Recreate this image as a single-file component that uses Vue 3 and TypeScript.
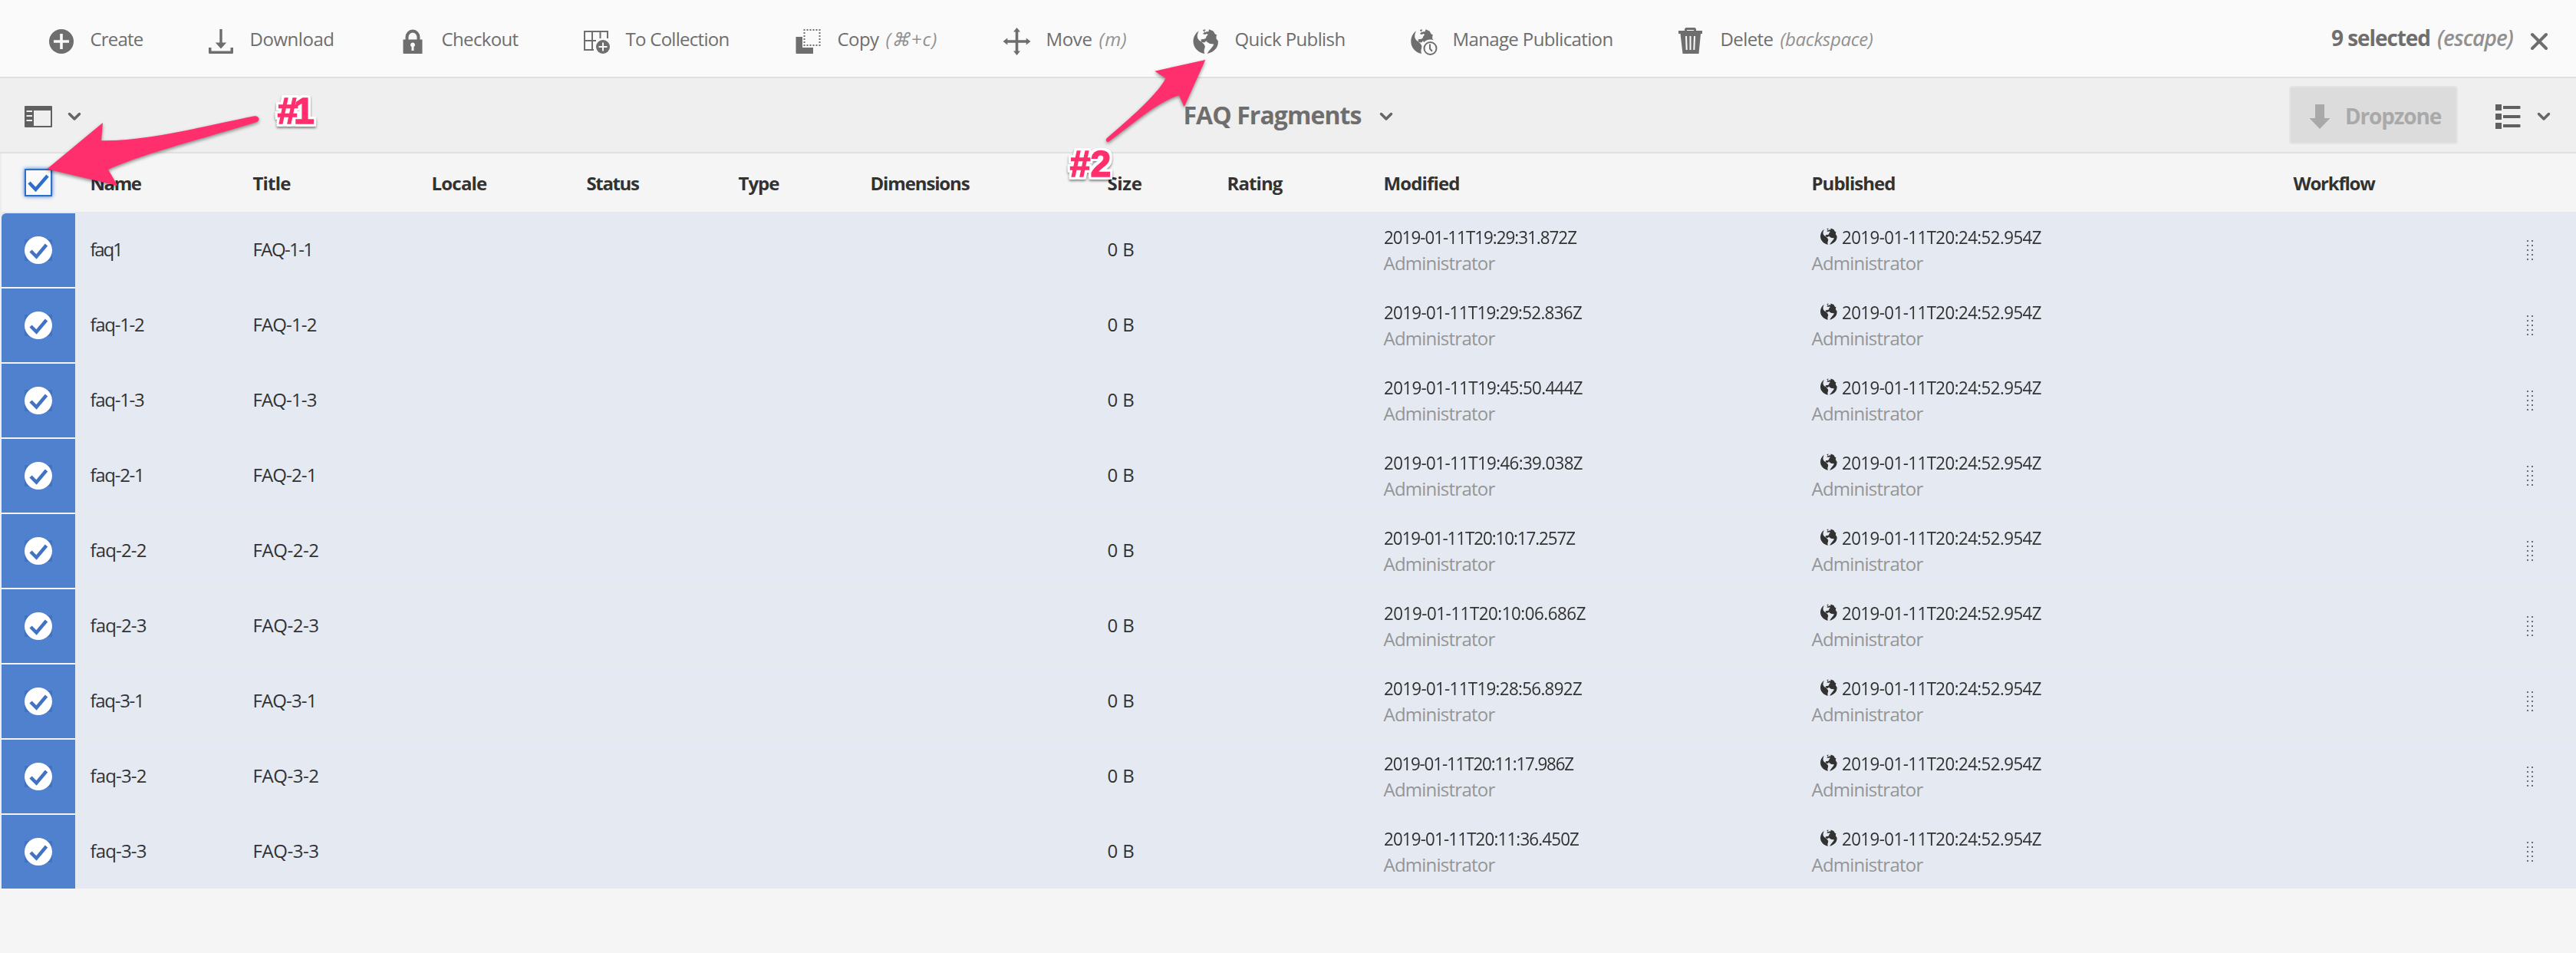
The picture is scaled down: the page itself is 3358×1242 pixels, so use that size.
<script setup lang="ts">
import type { Directive } from 'vue'

interface Action {
  icon: string
  label: string
  width: number
  hint?: string
  hintWidth?: number
}

interface Row {
  name: string
  nameWidth: number
  title: string
  titleWidth: number
  modified: string
  modifiedWidth: number
}

// Tracks a label so that it fills the given width; `narrow` also condenses its glyphs.
const vFit: Directive<HTMLElement, number, 'narrow'> = {
  mounted(el, { value, modifiers }) {
    const count = Array.from(el.textContent ?? '').length
    if (!value || !count) return
    const scale = modifiers.narrow ? 0.93 : 1
    const spacing = (value / scale - el.getBoundingClientRect().width) / count
    el.style.letterSpacing = `${spacing.toFixed(3)}px`
    if (scale !== 1) el.style.transform = `scaleX(${scale})`
  },
}

const actions: Action[] = [
  { icon: 'create', label: 'Create', width: 69 },
  { icon: 'download', label: 'Download', width: 110 },
  { icon: 'checkout', label: 'Checkout', width: 100 },
  { icon: 'collection', label: 'To Collection', width: 135 },
  { icon: 'copy', label: 'Copy', width: 54, hint: '(⌘+c)', hintWidth: 68 },
  { icon: 'move', label: 'Move', width: 60, hint: '(m)', hintWidth: 37 },
  { icon: 'globe', label: 'Quick Publish', width: 144 },
  { icon: 'manage', label: 'Manage Publication', width: 209 },
  { icon: 'delete', label: 'Delete', width: 69, hint: '(backspace)', hintWidth: 121 },
]

const columns = [
  { label: 'Name', width: 66 },
  { label: 'Title', width: 49 },
  { label: 'Locale', width: 72 },
  { label: 'Status', width: 68 },
  { label: 'Type', width: 53 },
  { label: 'Dimensions', width: 129 },
  { label: 'Size', width: 45 },
  { label: 'Rating', width: 72 },
  { label: 'Modified', width: 99 },
  { label: 'Published', width: 109 },
  { label: 'Workflow', width: 106 },
]

const rows: Row[] = [
  { name: 'faq1', nameWidth: 41, title: 'FAQ-1-1', titleWidth: 78, modified: '2019-01-11T19:29:31.872Z', modifiedWidth: 251 },
  { name: 'faq-1-2', nameWidth: 70, title: 'FAQ-1-2', titleWidth: 83, modified: '2019-01-11T19:29:52.836Z', modifiedWidth: 258 },
  { name: 'faq-1-3', nameWidth: 70, title: 'FAQ-1-3', titleWidth: 83, modified: '2019-01-11T19:45:50.444Z', modifiedWidth: 259 },
  { name: 'faq-2-1', nameWidth: 70, title: 'FAQ-2-1', titleWidth: 83, modified: '2019-01-11T19:46:39.038Z', modifiedWidth: 259 },
  { name: 'faq-2-2', nameWidth: 73, title: 'FAQ-2-2', titleWidth: 86, modified: '2019-01-11T20:10:17.257Z', modifiedWidth: 249 },
  { name: 'faq-2-3', nameWidth: 73, title: 'FAQ-2-3', titleWidth: 86, modified: '2019-01-11T20:10:06.686Z', modifiedWidth: 263 },
  { name: 'faq-3-1', nameWidth: 70, title: 'FAQ-3-1', titleWidth: 83, modified: '2019-01-11T19:28:56.892Z', modifiedWidth: 258 },
  { name: 'faq-3-2', nameWidth: 73, title: 'FAQ-3-2', titleWidth: 86, modified: '2019-01-11T20:11:17.986Z', modifiedWidth: 247 },
  { name: 'faq-3-3', nameWidth: 73, title: 'FAQ-3-3', titleWidth: 86, modified: '2019-01-11T20:11:36.450Z', modifiedWidth: 254 },
]

const published = '2019-01-11T20:24:52.954Z'

const globeWest = 'M7.3 2.2C2.8 5.2 0 10.2 0 16c0 7.600 5.800 14.500 14.800 16C14 29.500 13.700 27.500 15 24.600c.8-1.800 0-3.300-1-4.900-1.500-2.300-4.500-3.700-6.400-5.200C5.500 12.600 4.700 9.500 5.600 6.500c.4-1.500 1-2.900 1.700-4.300z'
const globeEast = 'M12.300 1.300 15.500.3 16 1.500l-1.500.8 1 2 2.500-1.300 1.800.5L20.500.3 26 2.600l2.500 3.900 2.300.9-.9 2 .2 3 2.300 3.100c.3 7-2.900 13.500-14.300 16.500 2-3.500 5.300-6.500 7.900-10.400l.7-2.200-5-.5-4-2.300-.7-1.300-2.500 2.200-3.800-.8-.5-1.400 0-2 3.300-.3 2.700-.9 1.200-3.200 1.800-1.600-1.500-1.300-2.500 1-2.900-1.100 2.500-2z'
</script>

<template>
  <div class="page">
    <header class="actionbar">
      <div class="actions">
        <div v-for="a in actions" :key="a.label" class="action">
          <svg class="icon" viewBox="0 0 36 36">
            <template v-if="a.icon === 'create'">
              <circle cx="18" cy="18" r="16" />
              <path class="inv" d="M16.200 8h3.600v8.200H28v3.600h-8.200V28h-3.600v-8.200H8v-3.600h8.200z" />
            </template>
            <template v-else-if="a.icon === 'download'">
              <path d="M16.300 2h3.400v17.500h5.500L18 27.500l-7.200-8h5.500z" />
              <path d="M2 26h3.500v4.500h25V26H34v6.500q0 1.500-1.500 1.500h-29Q2 34 2 32.500z" />
            </template>
            <template v-else-if="a.icon === 'checkout'">
              <path class="line" d="M10.500 16v-3.500a7.500 8 0 0 1 15 0V16" stroke-width="4" />
              <path d="M5.500 15.500h25V34h-24q-1 0-1-1z" />
              <path class="inv" d="M18 19.500a3 3 0 0 1 1.500 5.600V30h-3v-4.900A3 3 0 0 1 18 19.500z" />
            </template>
            <template v-else-if="a.icon === 'collection'">
              <path class="line" d="M14 29H2V5h30v9M2 17h15M12 5v24M22.500 5v9" stroke-width="2" />
              <circle cx="26" cy="25" r="9" />
              <path class="inv" d="M25 19.500h2V24h4.500v2H27v4.500h-2V26h-4.500v-2H25z" />
            </template>
            <template v-else-if="a.icon === 'copy'">
              <path d="M1.500 12h8.500v14h14v8h-21.500q-1 0-1-1z" />
              <path d="M11.500 3h22M11.500 23h22" class="line" stroke-width="2" stroke-dasharray="2 2" />
              <path d="M12.500 6v16M32.500 6v16" class="line" stroke-width="2" stroke-dasharray="2 2" />
            </template>
            <template v-else-if="a.icon === 'move'">
              <path d="M17.500 0 22 5.500h-2.700v10.800h10.400V13.500l5.800 4.500-5.800 4.500v-2.800H19.300v10.800H22L17.500 36 13 30.500h2.700V19.700H5.300v2.800L-.5 18l5.800-4.500v2.800h10.400V5.500H13z" />
            </template>
            <template v-else-if="a.icon === 'globe'">
              <g transform="translate(1.500 2)"><path :d="globeWest" /><path :d="globeEast" /></g>
            </template>
            <template v-else-if="a.icon === 'manage'">
              <g transform="translate(1.300 2) scale(.93 1)"><path :d="globeWest" /><path :d="globeEast" /></g>
              <circle class="inv" cx="26.500" cy="26.500" r="11" />
              <circle class="line" cx="26.500" cy="27" r="8" stroke-width="2" />
              <path class="line" d="M26 21.500v6l3 3.200" stroke-width="2" />
            </template>
            <template v-else>
              <g transform="translate(-1.500 0)">
                <path class="line" d="M12 6V2.500Q12 1.500 13 1.500h10q1 0 1 1V6" stroke-width="3" />
                <path d="M2.500 4h31v4h-2L29 34H8L5 8H2.500z" />
                <path class="seam" d="m12.500 11 .7 18M18 11v18m5.500-18-.7 18" />
              </g>
            </template>
          </svg>
          <span v-fit="a.width">{{ a.label }}</span>
          <i v-if="a.hint" v-fit="a.hintWidth ?? 0" class="hint">{{ a.hint }}</i>
        </div>
      </div>
      <div class="selection">
        <span v-fit="129">9 selected</span>
        <i v-fit="99" class="hint">(escape)</i>
        <svg class="close" viewBox="0 0 24 24"><path d="M3 3l18 18M21 3 3 21" /></svg>
      </div>
    </header>

    <nav class="shellbar">
      <div class="rail">
        <svg class="railicon" viewBox="0 0 36 28">
          <path fill-rule="evenodd" d="M1 0h34q1 0 1 1v26q0 1-1 1H1q-1 0-1-1V1q0-1 1-1zM12 6v20h22V6zM2.500 6v2H10V6zm0 6v2H10v-2zm0 6v2H10v-2z" />
        </svg>
        <svg class="chevron" viewBox="0 0 18 12"><path d="m2.500 2.500 6.500 6.500 6.500-6.500" /></svg>
      </div>
      <div class="crumb">
        <span v-fit="232">FAQ Fragments</span>
        <svg class="chevron" viewBox="0 0 18 12"><path d="m2.500 2.500 6.500 6.500 6.500-6.500" /></svg>
      </div>
      <div class="views">
        <div class="dropzone">
          <svg viewBox="0 0 28 32"><path d="M8.500 0h11q.5 0 .5.500V18h7.500L14 32 .5 18H8V.500q0-.5.500-.5z" /></svg>
          <span v-fit="125">Dropzone</span>
        </div>
        <svg class="list" viewBox="0 0 33 32">
          <path d="M0 0h8v8H0zM10 2h21.500q1 0 1 1v2q0 1-1 1H10zM0 12h8v8H0zm10 2h21.500q1 0 1 1v2q0 1-1 1H10zM0 24h8v8H0zm10 2h21.500q1 0 1 1v2q0 1-1 1H10z" />
        </svg>
        <svg class="chevron" viewBox="0 0 18 12"><path d="m2.500 2.500 6.500 6.500 6.500-6.500" /></svg>
      </div>
    </nav>

    <section class="table">
      <div class="grid head">
        <div class="pick">
          <span class="checkbox">
            <svg viewBox="0 0 32 32"><path d="m4 16 8.500 9L28 7" /></svg>
          </span>
        </div>
        <div v-for="c in columns" :key="c.label" class="cell">
          <span v-fit="c.width">{{ c.label }}</span>
        </div>
      </div>

      <div v-for="r in rows" :key="r.name" class="grid row">
        <div class="pick">
          <span class="tick">
            <svg viewBox="0 0 36 36">
              <circle cx="18" cy="18" r="18" />
              <path d="m8 19 7.500 7.500L28.500 11" />
            </svg>
          </span>
        </div>
        <div class="cell"><span v-fit="r.nameWidth">{{ r.name }}</span></div>
        <div class="cell"><span v-fit="r.titleWidth">{{ r.title }}</span></div>
        <div class="cell"></div>
        <div class="cell"></div>
        <div class="cell"></div>
        <div class="cell"></div>
        <div class="cell"><span v-fit="35">0 B</span></div>
        <div class="cell"></div>
        <div class="cell stack">
          <div class="line1"><span v-fit.narrow="r.modifiedWidth">{{ r.modified }}</span></div>
          <div class="who"><span v-fit="145">Administrator</span></div>
        </div>
        <div class="cell stack">
          <div class="line1 pub">
            <svg viewBox="0 0 33 32"><path :d="globeWest" /><path :d="globeEast" /></svg>
            <span v-fit.narrow="260">{{ published }}</span>
          </div>
          <div class="who"><span v-fit="145">Administrator</span></div>
        </div>
        <div class="cell"></div>
        <div class="handle">
          <svg viewBox="0 0 8 26"><path d="M1 0v26M7 0v26" /></svg>
        </div>
      </div>
    </section>

    <svg class="notes" viewBox="0 0 3358 1242">
      <g class="arrows">
        <path d="M61.300 220.300 134 160l-2 23.300C190 184 250 168 331.700 151.300 337 150.500 340 156.500 335 158.700 275 178 185 200 141 221l12.300 21z" />
        <path d="M1571.300 78l-66 14.700 14.400 9.300C1508 124 1473 154 1442.700 180.300 1440.500 183 1443 186.300 1446 184.300 1475 163 1510 132 1537 124.300l6.700 15z" />
      </g>
      <g class="labels">
        <text x="361" y="160.500"><tspan class="hash">#</tspan><tspan x="383">1</tspan></text>
        <text x="1394" y="229.500"><tspan class="hash">#</tspan><tspan x="1421.500">2</tspan></text>
      </g>
    </svg>
  </div>
</template>

<style>
body {
  margin: 0;
  background: #f4f4f4;
}
</style>

<style scoped>
.page {
  position: relative;
  width: 3358px;
  height: 1242px;
  overflow: hidden;
  background: #f5f5f5;
  color: #323232;
  font-family: "Open Sans", "Noto Sans", sans-serif;
  font-size: 24px;
  font-stretch: 90%;
  line-height: 32px;
  white-space: nowrap;
}
svg {
  display: block;
  flex: none;
  overflow: visible;
}
span,
i {
  flex: none;
  transform-origin: left center;
}
.actionbar {
  display: flex;
  justify-content: space-between;
  height: 100px;
  border-bottom: 2px solid #e0e0e0;
  background: #fafafa;
  color: #6e6e6e;
}
.actions {
  display: grid;
  grid-template-columns: 208px 250px 240px 276px 272px 246px 284px 349px 300px;
  padding-left: 62px;
}
.action {
  display: flex;
  align-items: flex-start;
  padding-top: 35px;
}
.icon {
  width: 36px;
  height: 36px;
  margin: 1px 19.500px 0 0;
  fill: #6e6e6e;
}
.icon .inv {
  fill: #fafafa;
}
.icon .line {
  fill: none;
  stroke: #6e6e6e;
}
.icon .seam {
  fill: none;
  stroke: #fafafa;
  stroke-width: 2;
}
.hint {
  margin-left: 9px;
  color: #919191;
}
.selection {
  display: flex;
  padding: 33px 36px 0 0;
  font-size: 28px;
  font-weight: 700;
}
.selection .hint {
  font-weight: 600;
}
.close {
  width: 24px;
  height: 24px;
  margin: 9px 0 0 22px;
}
.close path {
  fill: none;
  stroke: #6e6e6e;
  stroke-width: 4;
  stroke-linecap: round;
}
.shellbar {
  display: grid;
  grid-template-columns: 1fr auto 1fr;
  height: 96px;
  border-bottom: 2px solid #e0e0e0;
  background: #efefef;
  color: #6e6e6e;
}
.rail {
  display: flex;
  padding: 36px 0 0 32px;
}
.railicon {
  width: 36px;
  height: 28px;
  fill: #606060;
}
.chevron {
  width: 18px;
  height: 12px;
  margin: 8px 0 0 20px;
}
.chevron path {
  fill: none;
  stroke: #666;
  stroke-width: 3.500;
  stroke-linecap: round;
  stroke-linejoin: round;
}
.crumb {
  display: flex;
  padding-top: 32px;
  font-size: 32px;
  font-weight: 700;
}
.crumb .chevron {
  margin: 12px 0 0 23px;
}
.views {
  display: flex;
  justify-content: flex-end;
  padding: 10px 33px 0 0;
}
.dropzone {
  box-sizing: border-box;
  display: flex;
  width: 220px;
  height: 76px;
  padding: 22px 0 0 24px;
  border: 2px solid #e4e4e4;
  border-radius: 4px;
  background: #dcdcdc;
  color: #a9a9a9;
  font-size: 28px;
  font-weight: 700;
}
.dropzone span {
  margin-top: -1px;
}
.dropzone svg {
  width: 28px;
  height: 32px;
  margin-right: 19px;
  fill: #a9a9a9;
}
.list {
  width: 33px;
  height: 32px;
  margin: 24px 0 0 49px;
  fill: #606060;
}
.views .chevron {
  margin: 34px 0 0 21px;
}
.table {
  border-left: 2px solid #ececec;
}
.grid {
  display: grid;
  grid-template-columns: 96px 212px 233px 202px 198px 172px 309px 156px 204px 558px 628px 304px 84px;
}
.head {
  height: 76px;
  border-bottom: 2px solid #e6e8ea;
  font-weight: 700;
}
.head .cell {
  align-items: flex-start;
  padding-top: 23px;
}
.row {
  height: 96px;
  border-bottom: 2px solid #e7e9eb;
  background: #e5eaf2;
}
.row:last-child {
  border-bottom: 0;
}
.cell {
  display: flex;
  align-items: center;
  padding-left: 19.500px;
}
.row .cell {
  padding-bottom: 3px;
}
.row .cell.stack {
  display: block;
  padding-top: 15px;
}
.line1,
.who {
  display: flex;
  height: 34px;
}
.who {
  color: #959595;
}
.pub svg {
  width: 22px;
  height: 22px;
  margin: 4px 6px 0 11px;
  fill: #323232;
}
.pick {
  display: flex;
  align-items: center;
  justify-content: center;
}
.row .pick {
  background: #4f81cf;
  box-shadow: 0 2px #f3f3f0;
}
.row:last-child .pick {
  box-shadow: none;
}
.row:nth-child(2) .pick {
  border-top-left-radius: 6px;
}
.checkbox {
  box-sizing: border-box;
  width: 36px;
  height: 36px;
  border: 2px solid #2d6fcb;
  background: #fafafa;
  box-shadow: 0 0 5px #2d6fcb;
}
.checkbox path {
  fill: none;
  stroke: #2d6fcb;
  stroke-width: 4.500;
}
.tick {
  width: 36px;
  height: 28px;
  background: #4273c3;
}
.tick svg {
  width: 36px;
  height: 36px;
  margin-top: -4px;
  fill: #fff;
}
.tick path {
  fill: none;
  stroke: #4273c3;
  stroke-width: 4.500;
}
.handle {
  display: flex;
  align-items: center;
  justify-content: flex-end;
  padding-right: 56px;
}
.handle svg {
  width: 8px;
  height: 26px;
}
.handle path {
  fill: none;
  stroke: #6a6d72;
  stroke-width: 2;
  stroke-dasharray: 2 4;
}
.notes {
  position: absolute;
  inset: 0;
  width: 3358px;
  height: 1242px;
  pointer-events: none;
}
.arrows {
  fill: #ff2f6e;
  filter: drop-shadow(0 2px 2px rgba(0, 0, 0, 0.45));
}
.labels {
  fill: #ff2f6e;
  stroke: #ff2f6e;
  stroke-width: 1.500px;
  font-family: "Liberation Sans", sans-serif;
  font-size: 48px;
  font-weight: 700;
  filter: drop-shadow(3px 0 0 #fff) drop-shadow(-3px 0 0 #fff) drop-shadow(0 3px 0 #fff)
    drop-shadow(0 -3px 0 #fff) drop-shadow(0 2px 1.500px rgba(0, 0, 0, 0.45));
}
.hash {
  font-style: italic;
}
</style>
